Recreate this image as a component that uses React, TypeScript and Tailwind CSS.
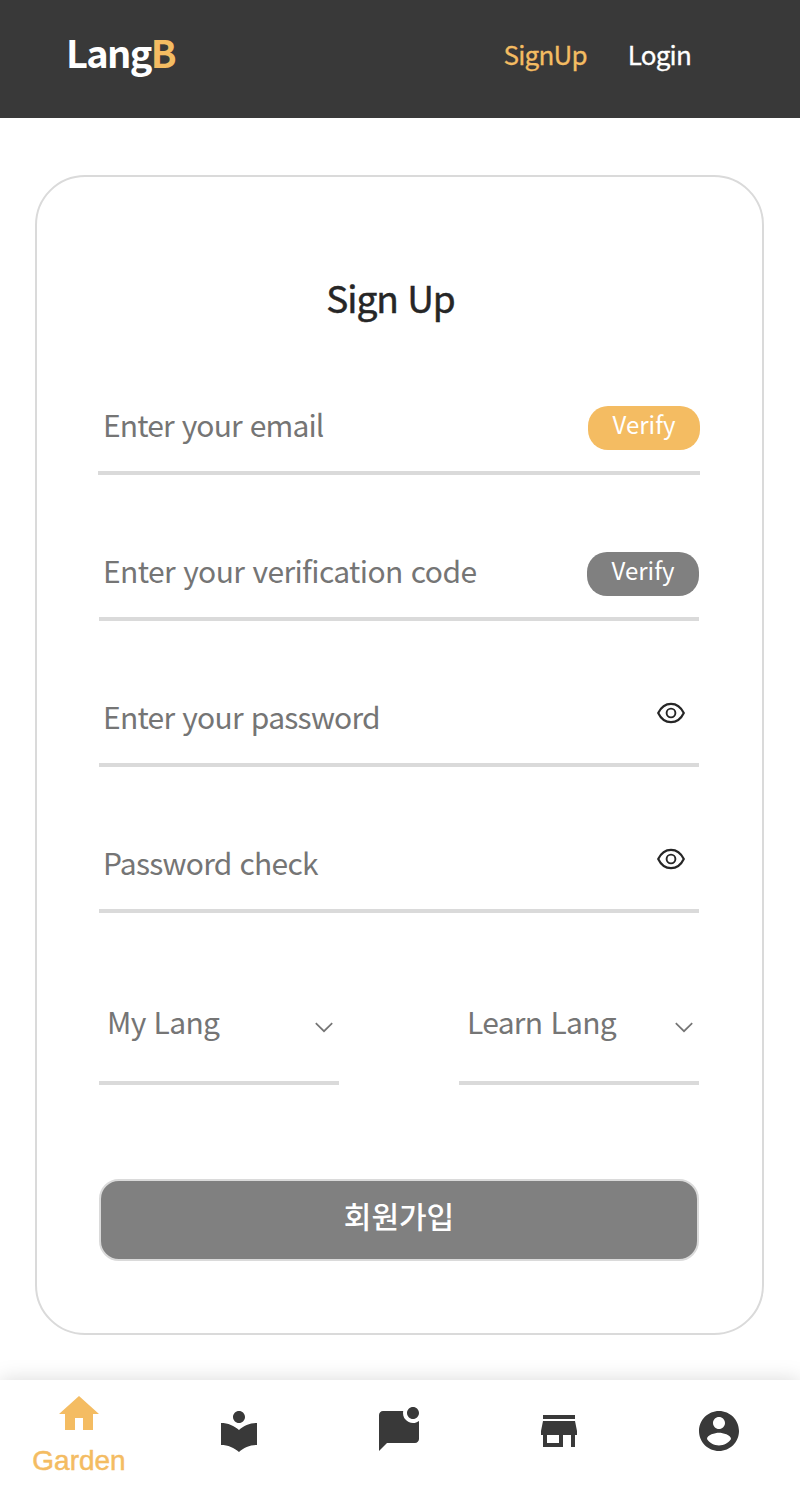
import React from 'react';
import { MdHome, MdLocalLibrary, MdMarkChatUnread, MdStore } from 'react-icons/md';

const EyeIcon: React.FC = () => (
  <svg width="30" height="24" viewBox="0 0 30 24" fill="none" stroke="#262626" strokeWidth="2.2">
    <path d="M2.2 12C5 6.2 9.5 2.8 15 2.8S25 6.2 27.8 12C25 17.8 20.5 21.2 15 21.2S5 17.8 2.2 12Z" strokeLinejoin="round" />
    <circle cx="15" cy="12" r="4.4" strokeWidth="1.9" />
  </svg>
);

const ChevronIcon: React.FC = () => (
  <svg width="18" height="12" viewBox="0 0 18 12" fill="none" stroke="#757575" strokeWidth="1.7">
    <path d="M0.8 1.2L9 9.2L17.2 1.2" />
  </svg>
);

const AccountIcon: React.FC<{ size: number }> = ({ size }) => (
  <svg width={size} height={size} viewBox="0 0 24 24" fill="currentColor">
    <path d="M12 2C6.48 2 2 6.48 2 12s4.48 10 10 10 10-4.48 10-10S17.52 2 12 2zm0 3c1.66 0 3 1.34 3 3s-1.34 3-3 3-3-1.34-3-3 1.34-3 3-3zm0 14.2c-2.5 0-4.71-1.28-6-3.22.03-1.99 4-3.08 6-3.08 1.99 0 5.97 1.09 6 3.08-1.29 1.94-3.5 3.22-6 3.22z" />
  </svg>
);

const passwordFields = [
  { id: 'password', placeholder: 'Enter your password' },
  { id: 'password-check', placeholder: 'Password check' },
];

const languageSelects = [
  { id: 'my-lang', label: 'My Lang' },
  { id: 'learn-lang', label: 'Learn Lang' },
];

const navItems = [
  { id: 'library', Icon: MdLocalLibrary },
  { id: 'chat', Icon: MdMarkChatUnread },
  { id: 'store', Icon: MdStore },
  { id: 'account', Icon: AccountIcon },
];

const App: React.FC = () => {
  return (
    <div className="flex h-[1492px] w-[800px] flex-col overflow-hidden bg-white font-['Noto_Sans_CJK_KR',sans-serif]">
      <header className="flex h-[118px] shrink-0 items-start justify-between bg-[#393939] pl-[66px] pr-[109px]">
        <h1 className="mt-[22px] text-[38px] font-bold leading-[60px] tracking-[-1.7px] text-white">
          Lang<span className="text-[#f4bc62]">B</span>
        </h1>
        <nav className="mt-[34px] flex gap-[41px] text-[26px] leading-[40px] tracking-[-0.8px]">
          <a href="#signup" className="text-[#f4bc62] [-webkit-text-stroke:0.3px_#f4bc62]">SignUp</a>
          <a href="#login" className="text-white [-webkit-text-stroke:0.3px_#fff]">Login</a>
        </nav>
      </header>

      <main className="flex-1 pl-[35px] pt-[57px]">
        <form className="h-[1160px] w-[729px] rounded-[50px] border-2 border-[#dadada] px-[62px]">
          <h2 className="mr-[18px] mt-[90px] text-center text-[37px] leading-[60px] tracking-[-1px] text-[#262626] [-webkit-text-stroke:0.5px_#262626] [word-spacing:2px]">
            Sign Up
          </h2>

          <div className="-ml-px mt-[49px] flex h-[99px] w-[602px] items-center justify-between border-b-4 border-[#dadada]">
            <input
              className="w-[440px] pl-[5px] text-[30px] leading-[44px] tracking-[-0.85px] [word-spacing:2px] placeholder:text-[#757575]"
              placeholder="Enter your email"
            />
            <button type="button" className="mt-[8px] h-[44px] w-[112px] rounded-[20px] bg-[#f4bc62] pb-[9px] text-[24px] leading-[35px] text-white">
              Verify
            </button>
          </div>
          <div className="mt-[47px] flex h-[99px] w-[600px] items-center justify-between border-b-4 border-[#dadada]">
            <input
              className="w-[440px] pl-[4px] text-[30px] leading-[44px] tracking-[-0.6px] [word-spacing:2px] placeholder:text-[#757575]"
              placeholder="Enter your verification code"
            />
            <button type="button" className="mt-[8px] h-[44px] w-[112px] rounded-[20px] bg-[#808080] pb-[9px] text-[24px] leading-[35px] text-white">
              Verify
            </button>
          </div>

          {passwordFields.map(field => (
            <div key={field.id} className="mt-[47px] flex h-[99px] w-[600px] items-center justify-between border-b-4 border-[#dadada] pr-[13px]">
              <input
                className="w-[440px] pl-[4px] text-[30px] leading-[44px] tracking-[-0.75px] [word-spacing:2px] placeholder:text-[#757575]"
                type="password"
                placeholder={field.placeholder}
              />
              <button type="button" className="pb-[6px]"><EyeIcon /></button>
            </div>
          ))}

          <div className="mt-[73px] flex w-[600px] justify-between">
            {languageSelects.map(select => (
              <button
                key={select.id}
                type="button"
                className="flex h-[99px] w-[240px] items-start justify-between border-b-4 border-[#dadada] pl-[8px] pr-[6px] pt-[13px] text-[30px] leading-[44px] tracking-[-0.7px] text-[#757575] [word-spacing:2px]"
              >
                {select.label}
                <span className="pt-[23px]"><ChevronIcon /></span>
              </button>
            ))}
          </div>

          <button
            type="submit"
            className="mt-[94px] h-[82px] w-[600px] rounded-[20px] border-2 border-[#dadada] bg-[#808080] pb-[10px] text-[30px] font-medium text-white"
          >
            회원가입
          </button>
        </form>
      </main>

      <nav className="flex h-[112px] w-full shrink-0 bg-white shadow-[0_0_20px_rgba(0,0,0,0.15)]">
        <a href="#garden" className="flex w-[160px] flex-col items-center pr-[2px] pt-[10px] text-[#f4bc62]">
          <MdHome size={48} />
          <span className="mt-[7px] font-['Liberation_Sans',sans-serif] text-[28px] leading-[32px] [-webkit-text-stroke:0.5px_#f4bc62]">Garden</span>
        </a>
        {navItems.map(({ id, Icon }) => (
          <a key={id} href={`#${id}`} className="flex w-[160px] justify-center pr-[2px] pt-[27px] text-[#393939]">
            <Icon size={48} />
          </a>
        ))}
      </nav>
    </div>
  );
};

export default App;
